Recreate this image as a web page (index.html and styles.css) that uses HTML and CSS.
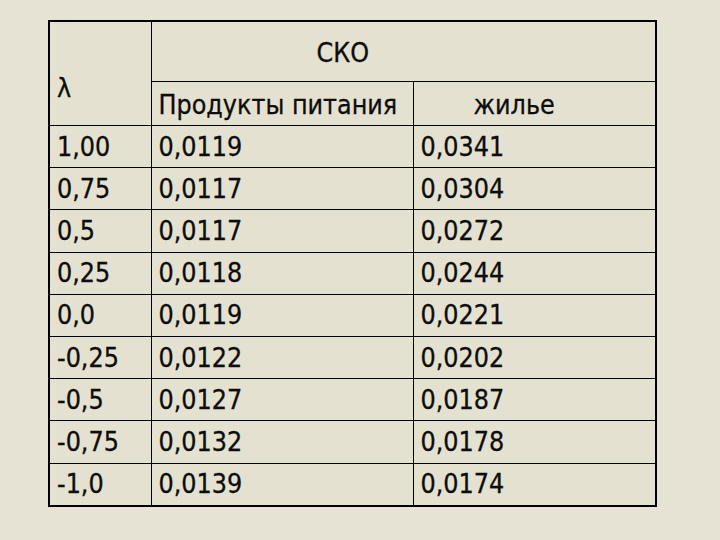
FILE: index.html
```html
<!DOCTYPE html>
<html lang="ru">
<head>
<meta charset="utf-8">
<link rel="stylesheet" href="styles.css">
</head>
<body>
<table class="grid">
  <colgroup>
    <col class="c1"><col class="c2"><col class="c3">
  </colgroup>
  <tr class="h1">
    <td class="lam" rowspan="2">λ</td>
    <td class="sko" colspan="2">СКО</td>
  </tr>
  <tr class="h2">
    <td>Продукты питания</td>
    <td class="zh">жилье</td>
  </tr>
  <tr><td>1,00</td><td>0,0119</td><td>0,0341</td></tr>
  <tr><td>0,75</td><td>0,0117</td><td>0,0304</td></tr>
  <tr><td>0,5</td><td>0,0117</td><td>0,0272</td></tr>
  <tr><td>0,25</td><td>0,0118</td><td>0,0244</td></tr>
  <tr><td>0,0</td><td>0,0119</td><td>0,0221</td></tr>
  <tr><td>-0,25</td><td>0,0122</td><td>0,0202</td></tr>
  <tr><td>-0,5</td><td>0,0127</td><td>0,0187</td></tr>
  <tr><td>-0,75</td><td>0,0132</td><td>0,0178</td></tr>
  <tr><td>-1,0</td><td>0,0139</td><td>0,0174</td></tr>
</table>
</body>
</html>
```
FILE: styles.css
```css
html, body {
  margin: 0;
  padding: 0;
  background: #e6e3d4;
  width: 720px;
  height: 540px;
  overflow: hidden;
}
.grid {
  margin: 20px 0 0 48px;
  border-collapse: collapse;
  table-layout: fixed;
  width: 607px;
  border: 2px solid #000;
  background: #e4e1d0;
  font-family: "DejaVu Sans Condensed", "DejaVu Sans", sans-serif;
  font-stretch: condensed;
  font-size: 26.6px;
  color: #0d0d0d;
  -webkit-text-stroke: 0.3px #0d0d0d;
}
.c1 { width: 102px; }
.c2 { width: 262px; }
.c3 { width: 243px; }
.grid td {
  border: 1px solid #000;
  padding: 0 0 0 7px;
  height: 41.2px;
  line-height: 30px;
  vertical-align: middle;
  white-space: nowrap;
}
.grid .h1 td { height: 57px; }
.grid .h2 td { height: 41px; padding-top: 2px; }
.grid td.lam { vertical-align: bottom; padding-bottom: 22px; }
.grid td.sko { padding-left: 165px; padding-top: 2px; }
.grid td.zh { padding-left: 60px; }
```
